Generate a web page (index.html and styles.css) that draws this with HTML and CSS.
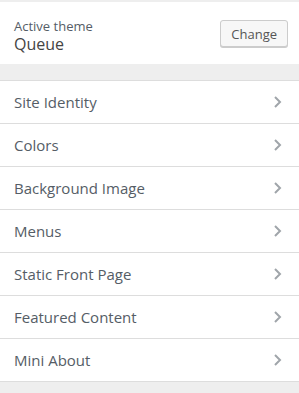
FILE: index.html
```html
<!DOCTYPE html>
<html>
<head>
<meta charset="utf-8">
<link rel="stylesheet" href="styles.css">
</head>
<body>
<div class="panel">
  <div class="theme">
    <div class="theme-info">
      <span class="theme-label">Active theme</span>
      <span class="theme-name">Queue</span>
    </div>
    <button class="change">Change</button>
  </div>
  <ul class="sections">
    <li class="section"><span>Site Identity</span><svg class="chev" viewBox="0 0 10 14"><path d="M2 2l5 5-5 5"/></svg></li>
    <li class="section"><span>Colors</span><svg class="chev" viewBox="0 0 10 14"><path d="M2 2l5 5-5 5"/></svg></li>
    <li class="section"><span>Background Image</span><svg class="chev" viewBox="0 0 10 14"><path d="M2 2l5 5-5 5"/></svg></li>
    <li class="section"><span>Menus</span><svg class="chev" viewBox="0 0 10 14"><path d="M2 2l5 5-5 5"/></svg></li>
    <li class="section"><span>Static Front Page</span><svg class="chev" viewBox="0 0 10 14"><path d="M2 2l5 5-5 5"/></svg></li>
    <li class="section"><span>Featured Content</span><svg class="chev" viewBox="0 0 10 14"><path d="M2 2l5 5-5 5"/></svg></li>
    <li class="section"><span>Mini About</span><svg class="chev" viewBox="0 0 10 14"><path d="M2 2l5 5-5 5"/></svg></li>
  </ul>
</div>
</body>
</html>
```
FILE: styles.css
```css
html, body {
  margin: 0;
  padding: 0;
  background: #eeeeee;
}
body {
  font-family: "Open Sans", "Liberation Sans", sans-serif;
  color: #555d66;
}
.panel {
  padding-top: 2px;
}
.theme {
  background: #fff;
  height: 62px;
  display: flex;
  align-items: center;
  justify-content: space-between;
  padding: 0 11px 0 14px;
  box-sizing: border-box;
}
.theme-info {
  display: flex;
  flex-direction: column;
  padding-top: 5px;
}
.theme-label {
  font-size: 13px;
  line-height: 16px;
  color: #555d66;
}
.theme-name {
  font-size: 16px;
  font-weight: 400;
  line-height: 20px;
  color: #444444;
}
.change {
  font-family: "Open Sans", "Liberation Sans", sans-serif;
  font-size: 13px;
  color: #555;
  background: #f7f7f7;
  border: 1px solid #cccccc;
  border-radius: 3px;
  box-shadow: 0 1px 0 #cccccc;
  height: 27px;
  padding: 0 10px;
  margin-top: 1px;
}
.sections {
  list-style: none;
  margin: 16px 0 0;
  padding: 0;
  border-top: 1px solid #dddddd;
}
.section {
  box-sizing: border-box;
  background: #fff;
  height: 43px;
  border-bottom: 1px solid #dddddd;
  display: flex;
  align-items: center;
  justify-content: space-between;
  padding: 0 14px 1px;
  font-size: 15px;
  color: #555d66;
}
.chev {
  width: 10px;
  height: 14px;
  margin-right: 2px;
}
.chev path {
  fill: none;
  stroke: #a0a5aa;
  stroke-width: 2;
}
```
